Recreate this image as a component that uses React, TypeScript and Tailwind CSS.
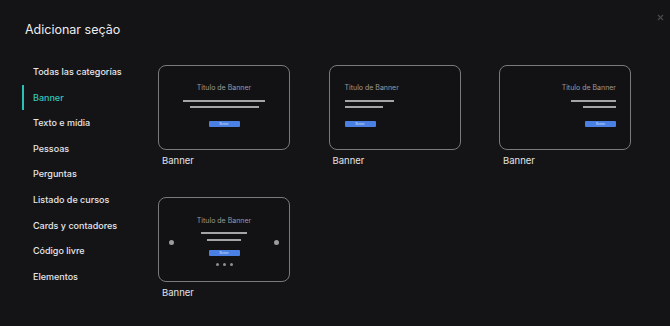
import { X } from "lucide-react"

const categories = [
  "Todas las categorías",
  "Banner",
  "Texto e mídia",
  "Pessoas",
  "Perguntas",
  "Listado de cursos",
  "Cards y contadores",
  "Código livre",
  "Elementos",
]

type Align = "center" | "left" | "right"

function MiniButton() {
  return (
    <div className="w-[31px] h-[6px] rounded-[1px] bg-[#4a80e4] flex items-center justify-center">
      <span className="text-[3px] leading-none text-[#cfe0ff]">Button</span>
    </div>
  )
}

function BannerCard({ align }: { align: Align }) {
  const items =
    align === "center" ? "items-center" : align === "left" ? "items-start pl-[15px]" : "items-end pr-[14px]"
  const long = align === "center" ? "w-[82px]" : align === "left" ? "w-[49px]" : "w-[45px]"
  const short = align === "center" ? "w-[69px]" : align === "left" ? "w-[38px]" : "w-[33px]"
  return (
    <div className="w-[132px]">
      <div className={`h-[85px] rounded-[8px] border-[1.5px] border-[#7a7a7e] bg-[#121215] flex flex-col pt-[17px] ${items}`}>
        <span className="text-[7px] leading-[10px] text-[#9a9a9e]">Titulo de Banner</span>
        <div className={`${long} h-[2px] bg-[#a5a5a8] mt-[7px]`} />
        <div className={`${short} h-[2px] bg-[#a5a5a8] mt-[4px]`} />
        <div className="mt-[13px]">
          <MiniButton />
        </div>
      </div>
      <p className="mt-[5px] pl-[4px] text-[9.5px] leading-[12px] text-[#e2e2e4]">Banner</p>
    </div>
  )
}

function SliderCard() {
  return (
    <div className="w-[132px]">
      <div className="h-[85px] rounded-[8px] border-[1.5px] border-[#7a7a7e] bg-[#121215] flex items-center px-[10px]">
        <div className="w-[5px] h-[5px] rounded-full bg-[#9c9ca0] mt-[6px]" />
        <div className="flex-1 flex flex-col items-center pt-[3px]">
          <span className="text-[7px] leading-[10px] text-[#9a9a9e]">Titulo de Banner</span>
          <div className="w-[46px] h-[2px] bg-[#a5a5a8] mt-[6px]" />
          <div className="w-[34px] h-[2px] bg-[#a5a5a8] mt-[5px]" />
          <div className="mt-[9px]">
            <MiniButton />
          </div>
          <div className="flex gap-[4px] mt-[7px]">
            <div className="w-[3px] h-[3px] rounded-full bg-[#8e8e92]" />
            <div className="w-[3px] h-[3px] rounded-full bg-[#8e8e92]" />
            <div className="w-[3px] h-[3px] rounded-full bg-[#8e8e92]" />
          </div>
        </div>
        <div className="w-[5px] h-[5px] rounded-full bg-[#9c9ca0] mt-[6px]" />
      </div>
      <p className="mt-[5px] pl-[4px] text-[9.5px] leading-[12px] text-[#e2e2e4]">Banner</p>
    </div>
  )
}

export default function App() {
  return (
    <main
      className="w-[670px] h-[326px] bg-[#141417] overflow-hidden"
      style={{ fontFamily: "Inter, 'Noto Sans', sans-serif" }}
    >
      <header className="flex items-start justify-between pl-[25px] pr-[5px] pt-[13px]">
        <h1 className="mt-[7px] text-[12.5px] leading-[20px] text-[#ececee] font-normal">Adicionar seção</h1>
        <X className="w-[9px] h-[9px] text-[#4a4a4e]" strokeWidth={3} />
      </header>

      <div className="flex mt-[19px]">
        <nav className="w-[158px] shrink-0 pl-[22px] flex flex-col">
          {categories.map((c) => {
            const active = c === "Banner"
            return (
              <div
                key={c}
                className={`h-[25.6px] flex items-center pl-[9px] border-l-2 ${
                  active ? "border-[#2bbfb6] text-[#35c6bd]" : "border-transparent text-[#e6e6e8]"
                } text-[9px] font-medium`}
              >
                {c}
              </div>
            )
          })}
        </nav>

        <div className="pt-[6px] grid grid-cols-[132px_132px_132px] gap-x-[38.5px] gap-y-[30px]">
          <BannerCard align="center" />
          <BannerCard align="left" />
          <BannerCard align="right" />
          <SliderCard />
        </div>
      </div>
    </main>
  )
}
